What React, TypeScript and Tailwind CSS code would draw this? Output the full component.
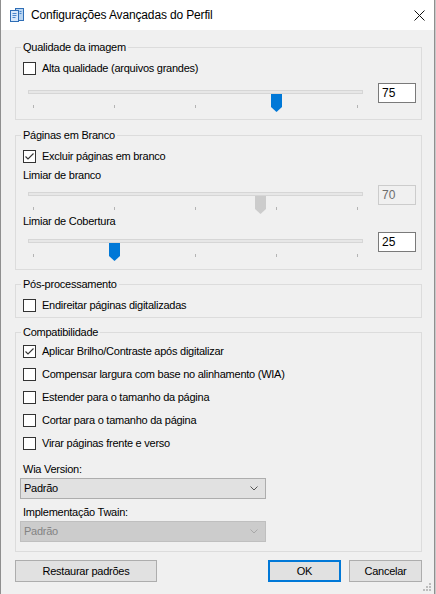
import React from 'react';

function Checkbox({ checked }: { checked?: boolean }) {
  return (
    <div className="w-[13px] h-[13px] shrink-0 border border-[#333333] bg-white flex items-center justify-center">
      {checked && (
        <svg width="11" height="11" viewBox="0 0 11 11">
          <path d="M1.5 5.5 L4 8 L9.5 2.5" fill="none" stroke="#333333" strokeWidth="1.1" />
        </svg>
      )}
    </div>
  );
}

function CheckRow({ label, checked, tall }: { label: string; checked?: boolean; tall?: boolean }) {
  return (
    <div className={`flex items-center gap-[6px] ${tall ? 'h-[23px]' : 'h-[22px]'}`}>
      <Checkbox checked={checked} />
      <span>{label}</span>
    </div>
  );
}

function Slider({ value, disabled }: { value: number; disabled?: boolean }) {
  // track runs 0..100 between first and last tick
  const left = 5 + value * 3.25 - 5.5;
  return (
    <div className="relative w-[335px] h-[28px]">
      <div className="mt-[9px] h-[4px] bg-[#e7e7e7] border border-[#d6d6d6]" />
      <div className="mt-[11px] px-[5px] flex justify-between">
        {[0, 1, 2, 3, 4].map(i => (
          <div key={i} className="w-px h-[3px] bg-[#b4b4b4]" />
        ))}
      </div>
      <svg className="absolute top-[4px]" style={{ left }} width="11" height="18" viewBox="0 0 11 18">
        <path d="M0 0H11V13L5.5 18L0 13Z" fill={disabled ? '#cccccc' : '#0078d7'} />
      </svg>
    </div>
  );
}

function NumBox({ value, disabled }: { value: string; disabled?: boolean }) {
  return (
    <div
      className={`mt-[2px] w-[38px] h-[20px] border pl-[3px] text-[12px] leading-[18px] tracking-normal ${
        disabled ? 'border-[#cccccc] bg-[#f0f0f0] text-[#6d6d6d]' : 'border-[#7a7a7a] bg-white text-black'
      }`}
    >
      {value}
    </div>
  );
}

function SliderRow({ value, disabled }: { value: number; disabled?: boolean }) {
  return (
    <div className="flex h-[28px]">
      <div className="ml-[5px]">
        <Slider value={value} disabled={disabled} />
      </div>
      <div className="ml-[15px]">
        <NumBox value={String(value)} disabled={disabled} />
      </div>
    </div>
  );
}

function Group({ title, className, children }: { title: string; className?: string; children: React.ReactNode }) {
  return (
    <fieldset className={`w-[407px] border border-[#dcdcdc] pl-[7px] ${className ?? ''}`}>
      <legend className="-ml-[2px] px-[2px] leading-[15px]">{title}</legend>
      {children}
    </fieldset>
  );
}

function Select({ disabled }: { disabled?: boolean }) {
  return (
    <div
      className={`-ml-[3px] w-[246px] h-[21px] border flex items-center pl-[3px] ${
        disabled ? 'border-[#bfbfbf] bg-[#cccccc] text-[#838383]' : 'border-[#adadad] bg-[#e1e1e1] text-black'
      }`}
    >
      <span>Padrão</span>
      <svg className="ml-auto mr-[7px]" width="8" height="5" viewBox="0 0 8 5">
        <path d="M0.5 0.5 L4 4 L7.5 0.5" fill="none" stroke={disabled ? '#a8a8a8' : '#555555'} strokeWidth="1" />
      </svg>
    </div>
  );
}

function AppIcon() {
  return (
    <svg width="16" height="16" viewBox="0 0 16 16">
      <rect x="6.5" y="1.5" width="8" height="12" fill="#b9d5f2" stroke="#2f6eb6" />
      <rect x="1.5" y="3.5" width="8" height="11" fill="#d6e7fa" stroke="#2f6eb6" />
      <path d="M3.5 6.5H7.5M3.5 8.5H7.5M3.5 10.5H6.5" stroke="#4a86cc" strokeWidth="1" />
      <path d="M10.5 4.5H12.5M10.5 6.5H12.5" stroke="#4a86cc" strokeWidth="1" />
    </svg>
  );
}

export default function App() {
  return (
    <div className="h-[594px] w-[436px] flex bg-[#c8c8c8] text-[11px] tracking-[-0.25px] text-black font-['Liberation_Sans',Arial,sans-serif]">
      <div className="w-[435px] h-full flex flex-col border-l border-r border-[#8f8f8f]">
        {/* Title bar */}
        <div className="h-[30px] bg-white flex items-center shrink-0">
          <div className="ml-[8px]">
            <AppIcon />
          </div>
          <span className="ml-[6px] text-[12px] tracking-[-0.15px]">Configurações Avançadas do Perfil</span>
          <svg className="ml-auto mr-[9px]" width="11" height="11" viewBox="0 0 11 11">
            <path d="M0.5 0.5L10.5 10.5M10.5 0.5L0.5 10.5" stroke="#111111" strokeWidth="1" />
          </svg>
        </div>

        {/* Body */}
        <div className="relative flex-1 bg-[#f0f0f0] pl-[14px] pt-[10px]">
          <Group title="Qualidade da imagem" className="pt-[2px] pb-[10px]">
            <CheckRow label="Alta qualidade (arquivos grandes)" />
            <div className="mt-[2px]">
              <SliderRow value={75} />
            </div>
          </Group>

          <Group title="Páginas em Branco" className="mt-[8px] pt-[2px] pb-[11px]">
            <CheckRow label="Excluir páginas em branco" checked />
            <div className="mt-[1px] h-[15px] leading-[15px]">Limiar de branco</div>
            <SliderRow value={70} disabled />
            <div className="mt-[3px] h-[15px] leading-[15px]">Limiar de Cobertura</div>
            <div className="mt-px">
              <SliderRow value={25} />
            </div>
          </Group>

          <Group title="Pós-processamento" className="mt-[7px] pt-[2px] pb-[1px]">
            <CheckRow label="Endireitar páginas digitalizadas" />
          </Group>

          <Group title="Compatibilidade" className="mt-[7px] pb-[9px]">
            <CheckRow label="Aplicar Brilho/Contraste após digitalizar" checked tall />
            <CheckRow label="Compensar largura com base no alinhamento (WIA)" tall />
            <CheckRow label="Estender para o tamanho da página" tall />
            <CheckRow label="Cortar para o tamanho da página" tall />
            <CheckRow label="Virar páginas frente e verso" tall />
            <div className="mt-[6px] h-[16px] leading-[16px]">Wia Version:</div>
            <div className="mt-px">
              <Select />
            </div>
            <div className="mt-[5px] h-[16px] leading-[16px]">Implementação Twain:</div>
            <div className="mt-px">
              <Select disabled />
            </div>
          </Group>

          {/* Buttons */}
          <div className="mt-[8px] w-[407px] flex">
            <button className="w-[142px] h-[22px] border border-[#adadad] bg-[#e1e1e1]">Restaurar padrões</button>
            <button className="ml-auto w-[73px] h-[22px] border-2 border-[#0078d7] bg-[#e1e1e1]">OK</button>
            <button className="ml-[8px] w-[73px] h-[22px] border border-[#adadad] bg-[#e1e1e1]">Cancelar</button>
          </div>

          {/* Size grip */}
          <svg className="absolute right-[3px] bottom-[3px]" width="8" height="8" viewBox="0 0 8 8">
            <rect x="6" y="0" width="2" height="2" fill="#bdbdbd" />
            <rect x="3" y="3" width="2" height="2" fill="#bdbdbd" />
            <rect x="6" y="3" width="2" height="2" fill="#bdbdbd" />
            <rect x="0" y="6" width="2" height="2" fill="#bdbdbd" />
            <rect x="3" y="6" width="2" height="2" fill="#bdbdbd" />
            <rect x="6" y="6" width="2" height="2" fill="#bdbdbd" />
          </svg>
        </div>
      </div>
    </div>
  );
}
